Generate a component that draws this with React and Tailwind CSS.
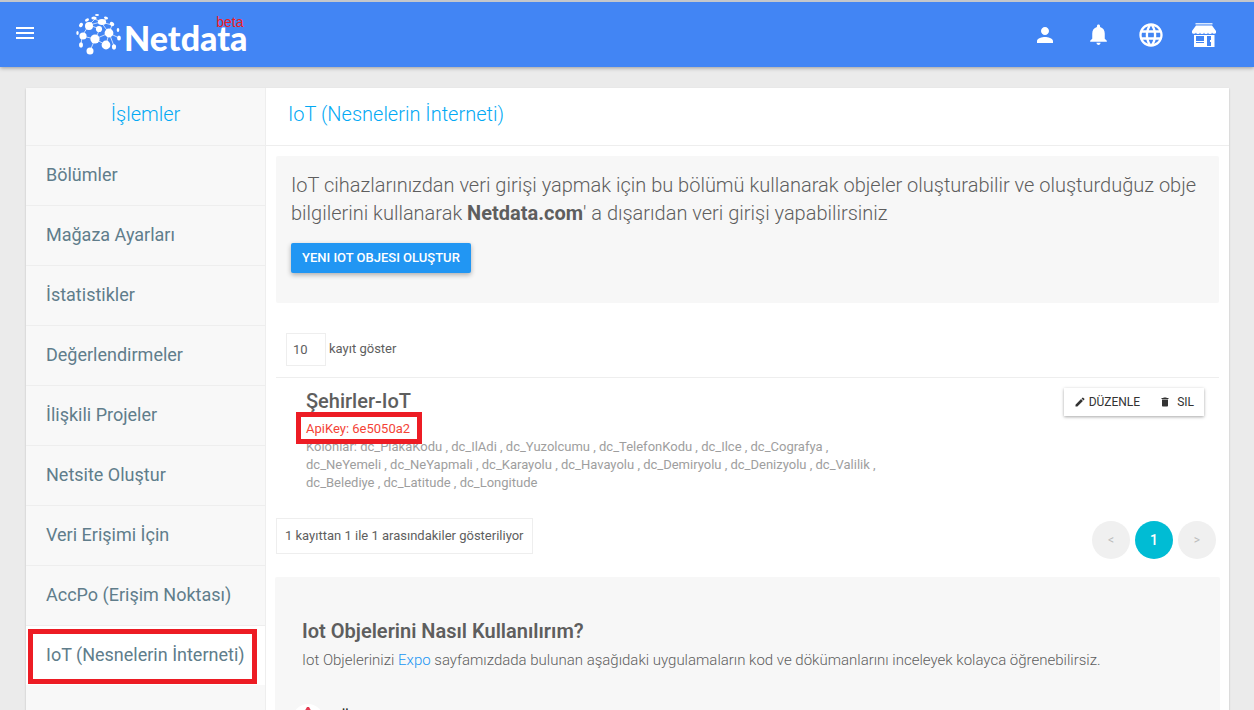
import { MdPerson, MdNotifications, MdMenu, MdLanguage, MdEdit, MdDelete } from "react-icons/md";

const MENU = [
  "Bölümler",
  "Mağaza Ayarları",
  "İstatistikler",
  "Değerlendirmeler",
  "İlişkili Projeler",
  "Netsite Oluştur",
  "Veri Erişimi İçin",
  "AccPo (Erişim Noktası)",
  "IoT (Nesnelerin İnterneti)",
];

function NetworkMark() {
  return (
    <svg viewBox="0 0 45 41" className="h-[41px] w-[45px]" fill="#fff" aria-hidden="true">
      <g stroke="#fff" strokeWidth="1" fill="none" opacity="0.7">
        <path d="M6 22 19 25 24 15 13 11 6 22M19 25 33 19 25 8 13 11M19 25 30 31 33 19M19 25 14 37M33 19 43 24M33 19 38 32M13 11 19 5 25 8 30 5M25 8 36 11 33 19M6 22 5 31" />
      </g>
      <circle cx="19" cy="25" r="4.6" />
      <circle cx="33" cy="19" r="4.4" />
      <circle cx="30" cy="31" r="4.4" />
      <circle cx="14" cy="37" r="3.5" />
      <circle cx="13" cy="12" r="4" />
      <circle cx="23" cy="15" r="3.1" />
      <circle cx="7" cy="22" r="3.6" />
      <ellipse cx="26" cy="8" rx="4.2" ry="3" />
      <ellipse cx="5" cy="31" rx="2" ry="2.7" />
      <ellipse cx="38" cy="33" rx="2.1" ry="2.7" />
      <ellipse cx="36" cy="10" rx="2.5" ry="1.9" transform="rotate(40 36 10)" />
      <ellipse cx="43" cy="24" rx="1.9" ry="2.5" />
      <ellipse cx="42" cy="16" rx="1.3" ry="2" />
      <ellipse cx="5" cy="11" rx="1.8" ry="2.3" transform="rotate(35 5 11)" />
      <ellipse cx="11" cy="6" rx="2.1" ry="1.4" transform="rotate(-25 11 6)" />
      <ellipse cx="18" cy="4" rx="2.7" ry="1.6" />
      <ellipse cx="30" cy="4" rx="2.1" ry="1.3" transform="rotate(20 30 4)" />
      <ellipse cx="21" cy="1" rx="2" ry="1" />
      <ellipse cx="1.5" cy="19" rx="1.2" ry="2" />
    </svg>
  );
}

function StoreIcon() {
  return (
    <svg viewBox="0 0 24 24" className="size-6" fill="#fff" aria-hidden="true">
      <path d="M3.5 0h17v1.500h-17z" opacity="0.8" />
      <path d="M4 2.500h16L24 8v.8a2 1.700 0 0 1-4 .6 2 1.700 0 0 1-4 0 2 1.700 0 0 1-4 0 2 1.700 0 0 1-4 0 2 1.700 0 0 1-4 0A2 1.700 0 0 1 0 8.800V8z" />
      <path fillRule="evenodd" d="M2 12H22.500V24H2zM4 13V18H12V13zM15 13V23H19V13zM4 19V20H12V19z" />
      <path d="M18 17h1v2h-1z" />
    </svg>
  );
}

function IconButton({ label, children }) {
  return (
    <button type="button" aria-label={label} className="flex size-7 items-center justify-center">
      {children}
    </button>
  );
}

function Header() {
  return (
    <header className="relative z-10 flex h-[67px] shrink-0 items-center border-t-2 border-[#c4c7cb] bg-[#4285f4] px-4 text-white shadow-[0_1px_4px_rgba(0,0,0,0.35)]">
      <button type="button" aria-label="Menü" className="mr-[39px] -ml-[3px] pb-1">
        <MdMenu className="size-6" />
      </button>
      <a href="#" aria-label="Netdata beta" className="relative flex items-center">
        <NetworkMark />
        <span className="pt-1.5 pl-[3px] font-['Lato','Carlito',sans-serif] text-[34px] leading-9 font-black">Netdata</span>
        <span className="absolute -top-0.5 right-1 font-['Liberation_Sans',sans-serif] text-sm text-[#ed1c24]">beta</span>
      </a>
      <nav className="mr-5 ml-auto flex items-center gap-[25px]">
        <IconButton label="Profil"><MdPerson className="size-6" /></IconButton>
        <IconButton label="Bildirimler"><MdNotifications className="size-[25px]" /></IconButton>
        <IconButton label="Dil"><MdLanguage className="size-7" /></IconButton>
        <IconButton label="Mağaza"><StoreIcon /></IconButton>
      </nav>
    </header>
  );
}

function Sidebar() {
  return (
    <aside className="w-60 shrink-0 border-r border-[#eeeeee] bg-[#f8f8f8]">
      <h2 className="h-[58px] border-b border-[#eeeeee] pt-3 text-center text-xl font-light text-[#03a9f4]">İşlemler</h2>
      <ul>
        {MENU.map((item, i) => {
          const active = i === MENU.length - 1;
          return (
            <li key={item} className={active ? "relative bg-white" : "border-b border-[#eeeeee]"}>
              <a href="#" className="flex h-[59px] items-center pb-0.5 pl-5 text-lg text-[#607d8b]">{item}</a>
              {active && <span className="pointer-events-none absolute top-[3px] right-2 left-0.5 h-[55px] border-5 border-[#ed1c24]" />}
            </li>
          );
        })}
      </ul>
    </aside>
  );
}

export default function App() {
  return (
    <div className="flex h-screen flex-col overflow-hidden bg-[#ebebeb] font-['Roboto',sans-serif] text-[13px] text-[#5e5e5e]">
      <Header />
      <div className="mt-[21px] mr-[25px] ml-[26px] flex flex-1 bg-white shadow-[0_1px_2px_rgba(0,0,0,0.2)]">
        <Sidebar />
        <main className="min-w-0 flex-1">
          <h1 className="h-[58px] border-b border-[#eeeeee] pt-3 pl-[22px] text-xl font-light text-[#03a9f4]">IoT (Nesnelerin İnterneti)</h1>
          <div className="px-2.5 pt-2.5">
            <section className="h-[147px] rounded-xs bg-[#f7f7f7] px-[15px] pt-[15px]">
              <p className="text-xl leading-7 font-light">
                IoT cihazlarınızdan veri girişi yapmak için bu bölümü kullanarak objeler oluşturabilir ve oluşturduğuz obje bilgilerini kullanarak <b className="font-bold">Netdata.com</b>' a dışarıdan veri girişi yapabilirsiniz
              </p>
              <button type="button" className="mt-4 h-[30px] rounded-xs bg-[#2196f3] px-[11px] font-medium text-white shadow-[0_2px_5px_rgba(0,0,0,0.3)]">YENI IOT OBJESI OLUŞTUR</button>
            </section>

            <div className="mt-[30px] flex h-[45px] items-start border-b border-[#eeeeee] pl-2.5">
              <label className="flex items-center gap-[3px]">
                <select className="h-[33px] w-10 appearance-none border border-[#eeeeee] bg-white pl-1.5" defaultValue="10">
                  <option>10</option>
                  <option>25</option>
                  <option>50</option>
                </select>
                <span className="pb-0.5">kayıt göster</span>
              </label>
            </div>

            <article className="flex items-start justify-between pt-[9px] pr-[15px] pl-[30px]">
              <div className="max-w-[580px]">
                <h3 className="text-xl leading-7 font-medium">Şehirler-IoT</h3>
                <div className="relative h-[23px] pt-1 leading-5 text-[#f44336]">
                  ApiKey: 6e5050a2
                  <span className="pointer-events-none absolute -top-[3px] -left-2.5 h-8 w-[126px] border-5 border-[#ed1c24]" />
                </div>
                <p className="leading-[18px] text-[#9e9e9e]">
                  Kolonlar: dc_PlakaKodu , dc_IlAdi , dc_Yuzolcumu , dc_TelefonKodu , dc_Ilce , dc_Cografya , dc_NeYemeli , dc_NeYapmali , dc_Karayolu , dc_Havayolu , dc_Demiryolu , dc_Denizyolu , dc_Valilik , dc_Belediye , dc_Latitude , dc_Longitude
                </p>
              </div>
              <div className="mt-px flex h-7 bg-white text-xs text-[#333333] shadow-[0_1px_3px_rgba(0,0,0,0.35)]">
                <button type="button" className="flex items-center gap-[3px] pr-[9px] pl-2.5"><MdEdit className="size-3" />DÜZENLE</button>
                <button type="button" className="flex items-center gap-1.5 px-2.5"><MdDelete className="size-3" />SIL</button>
              </div>
            </article>

            <div className="mt-[26px] flex h-[59px] items-start justify-between pr-[3px]">
              <p className="flex h-9 items-center border border-[#eeeeee] px-2">1 kayıttan 1 ile 1 arasındakiler gösteriliyor</p>
              <nav className="mt-[3px] flex gap-[5px]">
                <button type="button" className="size-[38px] rounded-full bg-[#f0f0f0] text-xs text-[#bdbdbd]">&lt;</button>
                <button type="button" className="size-[38px] rounded-full bg-[#00bcd4] text-sm font-medium text-white">1</button>
                <button type="button" className="size-[38px] rounded-full bg-[#f0f0f0] text-xs text-[#bdbdbd]">&gt;</button>
              </nav>
            </div>

            <section className="-mx-px rounded-xs bg-[#f7f7f7] px-[27px] pt-10 pb-10">
              <h2 className="text-xl leading-7 font-semibold">Iot Objelerini Nasıl Kullanılırım?</h2>
              <p className="mt-[5px] text-[15px] leading-5 font-light">
                Iot Objelerinizi <a href="#" className="text-[#2196f3]">Expo</a> sayfamızdada bulunan aşağıdaki uygulamaların kod ve dökümanlarını inceleyek kolayca öğrenebilirsiz.
              </p>
              <div className="mt-[34px] -ml-2.5 flex gap-4">
                <span className="flex size-8 justify-center rounded-full bg-white pt-[3px]">
                  <svg viewBox="0 0 16 16" className="size-4" aria-hidden="true">
                    <path d="M7 0h2l4 7-5 7-5-7z" fill="#e53950" />
                  </svg>
                </span>
                <h3 className="pt-0.5 text-base leading-6 text-[#222222]">Ülkeler</h3>
              </div>
            </section>
          </div>
        </main>
      </div>
    </div>
  );
}
